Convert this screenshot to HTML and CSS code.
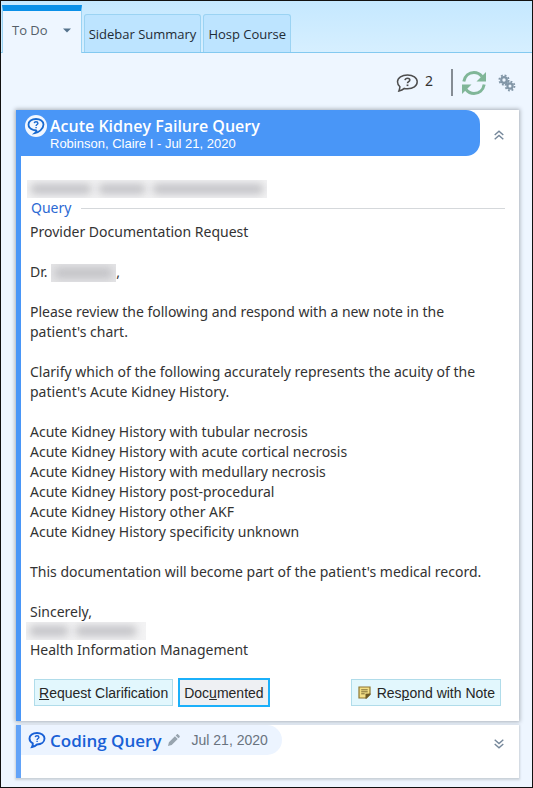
FILE: index.html
```html
<!DOCTYPE html>
<html lang="en">
<head>
  <meta charset="UTF-8">
  <meta name="viewport" content="width=device-width, initial-scale=1">
  <title>To Do</title>
  <link rel="stylesheet" href="styles.css">
</head>
<body>
  <div class="window">
    <nav class="tabs">
      <button class="tab active" type="button">To Do
        <svg class="caret" width="8" height="5" viewBox="0 0 8 5"><path d="M0 0.5h8L4 4.5z" fill="#54728c"/></svg>
      </button>
      <button class="tab" type="button">Sidebar Summary</button>
      <button class="tab" type="button">Hosp Course</button>
    </nav>

    <div class="toolbar">
      <div class="query-count">
        <svg width="22" height="20" viewBox="0 0 22 20" fill="none" stroke="#4d4d4d">
          <path d="M11.5 2C6 2 1.5 4.7 1.5 8.8c0 2.2 1 3.8 2.4 5-.2 1.6-.5 2.9-1 4.200 2-.4 4-1.300 5.400-2.600 1 .2 2.200.3 3.200.3 5.500 0 9.700-2.700 9.700-6.900S17 2 11.500 2z" stroke-width="1.500"/>
          <path d="M9 7.200c.3-1.500 1.300-2 2.500-2 1.400 0 2.300.8 2.300 1.900 0 1.600-2.300 1.500-2.300 3.200" stroke-width="1.600"/>
          <path d="M11.500 11.500v1.600" stroke-width="1.800"/>
        </svg>
        <span>2</span>
      </div>
      <span class="divider"></span>
      <button class="icon-button" type="button" aria-label="Refresh">
        <svg width="24" height="26" viewBox="0 0 24 26">
          <g fill="none" stroke="#80b698" stroke-width="3">
            <path d="M1.800 11.500C2.800 6 7 2.500 12 2.500c3.500 0 6 1.500 8 4"/>
            <path d="M22.200 14.500C21.200 20 17 23.500 12 23.500c-3.500 0-6-1.500-8-4"/>
          </g>
          <path d="M24 2v9.500h-9.500z" fill="#80b698"/>
          <path d="M0 24v-9.500h9.500z" fill="#80b698"/>
        </svg>
      </button>
      <button class="icon-button" type="button" aria-label="Settings">
        <svg width="18" height="18" viewBox="0 0 18 18" fill="none" stroke="#8296a7">
          <circle cx="6" cy="6" r="2.800" stroke-width="2.200"/>
          <circle cx="6" cy="6" r="4.700" stroke-width="1.800" stroke-dasharray="1.900 1.791"/>
          <circle cx="12" cy="12" r="2.600" stroke-width="2.200"/>
          <circle cx="12" cy="12" r="4.500" stroke-width="1.800" stroke-dasharray="1.800 1.734"/>
        </svg>
      </button>
    </div>

    <main class="cards">
      <section class="card card-open">
        <header class="card-header">
          <div class="banner">
            <span class="badge">
              <svg width="18" height="18" viewBox="0 0 18 18" fill="none" stroke="#1769cf">
                <path d="M9 2C4.800 2 1.500 4.300 1.500 7.600c0 2.500 1.900 4.500 4.800 5.300 1.600.4 2.900.4 3.200.7.300.7-.5 1.600-1.700 2.600 3.500-.5 8.700-4 8.700-8.600C16.500 4.300 13.200 2 9 2z" stroke-width="1.800"/>
                <path d="M7.200 6.200C7.400 5.200 8.200 4.800 9 4.800c1.100 0 1.900.5 1.900 1.500 0 1.200-1.800 1.200-1.800 2.600M9.100 9.900v1.400" stroke-width="1.400"/>
              </svg>
            </span>
            <div class="banner-text">
              <h2>Acute Kidney Failure Query</h2>
              <p>Robinson, Claire I - Jul 21, 2020</p>
            </div>
          </div>
          <button class="icon-button toggle" type="button" aria-label="Collapse">
            <svg width="10" height="10" viewBox="0 0 10 10" fill="none" stroke="#75879a" stroke-width="1.400"><path d="M.7 5L5 1.200 9.300 5M.7 9.300L5 5.500l4.300 3.800"/></svg>
          </button>
        </header>

        <div class="card-body">
          <div class="redacted redacted-heading"><i style="width: 63px"></i><i style="width: 48px"></i><i style="width: 116px"></i></div>
          <h3>Query</h3>
          <p>Provider Documentation Request</p>
          <p>Dr. <span class="redacted redacted-inline"><i style="width: 58px"></i></span>,</p>
          <p>Please review the following and respond with a new note in the patient's chart.</p>
          <p>Clarify which of the following accurately represents the acuity of the patient's Acute Kidney History.</p>
          <ul>
            <li>Acute Kidney History with tubular necrosis</li>
            <li>Acute Kidney History with acute cortical necrosis</li>
            <li>Acute Kidney History with medullary necrosis</li>
            <li>Acute Kidney History post-procedural</li>
            <li>Acute Kidney History other AKF</li>
            <li>Acute Kidney History specificity unknown</li>
          </ul>
          <p>This documentation will become part of the patient's medical record.</p>
          <div class="signature">
            <div>Sincerely,</div>
            <div class="redacted redacted-name"><i style="width: 38px"></i><i style="width: 60px"></i></div>
            <div>Health Information Management</div>
          </div>
        </div>

        <footer class="actions">
          <button class="action" type="button"><u>R</u>equest Clarification</button>
          <button class="action focused" type="button">Doc<u>u</u>mented</button>
          <button class="action respond" type="button">
            <svg width="13" height="13" viewBox="0 0 13 13">
              <path d="M1 1h11v7l-4 4H1z" fill="#f3df86" stroke="#8d7530" stroke-width="1.200"/>
              <path d="M12.500 7.500v1.200l-4 4H7.500v-5z" fill="#6f5b25"/>
              <path d="M3.200 3.800h6.500M3.200 5.800h6.500M3.200 7.800h3.500" stroke="#7d6c37"/>
            </svg>
            <span>Res<u>p</u>ond with Note</span>
          </button>
        </footer>
      </section>

      <section class="card card-closed">
        <header class="card-header">
          <div class="pill">
            <svg width="18" height="18" viewBox="0 0 18 18" fill="none" stroke="#1860d6">
              <path d="M9 2C4.800 2 1.500 4.300 1.500 7.600c0 2 1.200 3.700 3.300 4.700.1 1.400-.2 2.600-.8 3.700 2.200-.4 3.800-1.300 5-2.500 4.300-.1 7.500-2.500 7.500-5.900C16.500 4.300 13.200 2 9 2z" stroke-width="1.900"/>
              <path d="M7.200 6.200C7.400 5.200 8.200 4.800 9 4.800c1.100 0 1.900.5 1.900 1.500 0 1.200-1.800 1.200-1.800 2.600M9.100 9.700v1.400" stroke-width="1.400"/>
            </svg>
            <h2>Coding Query</h2>
            <svg class="pencil" width="12" height="12" viewBox="0 0 13 13" fill="#98a4af"><path d="M0 13l1-4 6.500-6.500 3 3L4 12zM8.300 1.700L9.500.5c.5-.5 1-.5 1.500 0L12.500 2c.5.5.5 1 0 1.500l-1.200 1.200z"/></svg>
            <time datetime="2020-07-21">Jul 21, 2020</time>
          </div>
          <button class="icon-button toggle" type="button" aria-label="Expand">
            <svg width="10" height="10" viewBox="0 0 10 10" fill="none" stroke="#75879a" stroke-width="1.400"><path d="M.7.700L5 4.500 9.300.7M.7 5L5 8.800 9.300 5"/></svg>
          </button>
        </header>
      </section>
    </main>
  </div>
</body>
</html>
```
FILE: styles.css
```css
* {
  box-sizing: border-box;
}

body {
  margin: 0;
  font-family: "Noto Sans", "Open Sans", sans-serif;
  font-size: 14px;
  color: #333;
}

h2, h3, p, ul {
  margin: 0;
  padding: 0;
  font-weight: normal;
}

button {
  margin: 0;
  padding: 0;
  border: none;
  background: none;
  cursor: pointer;
}

svg {
  display: block;
  flex: none;
}

.window {
  min-height: 100vh;
  border: 1px solid #111;
  background: #eef6ff;
}

/* tabs */
.tabs {
  display: flex;
  align-items: flex-end;
  gap: 2px;
  height: 52px;
  padding-left: 1px;
  border-bottom: 1px solid #83c9f0;
  background: linear-gradient(#c5e8ff, #d6efff);
}

.tab {
  height: 38px;
  padding: 0 4px;
  border: 1px solid #9bd3f3;
  border-bottom: none;
  border-radius: 3px 3px 0 0;
  background: #bde4ff;
  font: 13px "Open Sans", sans-serif;
  color: #1f2b35;
}

.tab.active {
  display: flex;
  align-items: center;
  gap: 15px;
  height: 48px;
  margin-bottom: -1px;
  padding: 0 10px 4px 9px;
  border-top: 6px solid #0b90e8;
  border-radius: 0;
  background: #eef6ff;
  color: #555f69;
}

/* toolbar */
.toolbar {
  display: flex;
  align-items: center;
  justify-content: flex-end;
  gap: 9px;
  height: 57px;
  padding: 2px 16px 0 0;
}

.query-count {
  display: flex;
  gap: 7px;
  margin-right: 9px;
  line-height: 16px;
}

.divider {
  width: 2px;
  height: 27px;
  background: #858c94;
}

.toolbar .icon-button + .icon-button {
  margin-left: 3px;
}

/* cards */
.cards {
  display: flex;
  flex-direction: column;
  gap: 4px;
  padding: 0 13px 9px 15px;
}

.card {
  border-left: 5px solid #4996f7;
  background: #fff;
  box-shadow: 0 0 4px 1px #a9b0b9;
}

.card-header {
  display: flex;
  align-items: center;
  justify-content: space-between;
}

.toggle {
  margin-right: 15px;
  padding-top: 4px;
}

.banner {
  display: flex;
  gap: 3px;
  flex: 1;
  height: 46px;
  margin-right: 14px;
  padding: 5px 4px;
  border-radius: 0 14px 14px 0;
  background: #4996f7;
  color: #fff;
}

.badge {
  display: grid;
  place-items: center;
  width: 22px;
  height: 22px;
  border-radius: 50%;
  background: #f2f7ff;
}

.banner h2 {
  font-family: "Open Sans", sans-serif;
  font-size: 16px;
  font-weight: 600;
  line-height: 22px;
}

.banner p {
  font: 13px/14px "Liberation Sans", sans-serif;
}

.card-body {
  padding: 24px 14px 0 9px;
  line-height: 20px;
}

.card-body p,
.card-body ul {
  margin-bottom: 20px;
}

.card-body p {
  padding-right: 20px;
}

.card-body ul {
  list-style: none;
}

.card-body h3 {
  display: flex;
  align-items: center;
  gap: 10px;
  font-size: 14px;
  color: #2b69d3;
  line-height: 20px;
  padding: 0 0 4px 1px;
}

.card-body h3::after {
  content: "";
  flex: 1;
  height: 1px;
  background: #d5d8db;
}

/* blurred out names */
.redacted {
  display: flex;
  align-items: center;
  gap: 8px;
  height: 18px;
  padding: 0 4px;
  background: #f3f3f4;
  overflow: hidden;
}

.redacted i {
  height: 10px;
  background: #c0c0c4;
  filter: blur(4px);
}

.redacted-heading {
  width: 240px;
  margin-left: -3px;
}

.redacted-inline {
  display: inline-flex;
  width: 65px;
  background: #e4e4e6;
  vertical-align: middle;
}

.redacted-name {
  width: 120px;
  margin-left: -4px;
}

/* buttons under the query */
.actions {
  display: flex;
  align-items: center;
  gap: 5px;
  padding: 18px 18px 14px 13px;
}

.action {
  height: 27px;
  padding: 0 4px;
  border: 1px solid #b0dcea;
  background: #e2f7fd;
  font: 14px "Liberation Sans", sans-serif;
  color: #262626;
}

.action.focused {
  height: 29px;
  border: 2px solid #1bb0fa;
  background: #eef0f3;
}

.respond {
  display: flex;
  align-items: center;
  gap: 6px;
  margin-left: auto;
  padding: 0 5px 0 6px;
}

/* collapsed card */
.card-closed {
  height: 53px;
  border-left-color: #62a3f8;
  box-shadow: 0 1px 2px 1px #c9d0d8;
}

.card-closed .card-header {
  align-items: flex-start;
}

.card-closed .toggle {
  margin-top: 10px;
}

.pill {
  display: flex;
  align-items: center;
  height: 30px;
  padding: 0 14px 0 7px;
  border-radius: 0 15px 15px 0;
  background: #ecf4ff;
}

.pill h2 {
  margin: 0 6px 0 4px;
  font-family: "Open Sans", sans-serif;
  font-size: 17px;
  font-weight: 600;
  color: #1860d6;
}

.pill time {
  margin-left: 12px;
  font: 14px "Liberation Sans", sans-serif;
  color: #69737e;
}
```
